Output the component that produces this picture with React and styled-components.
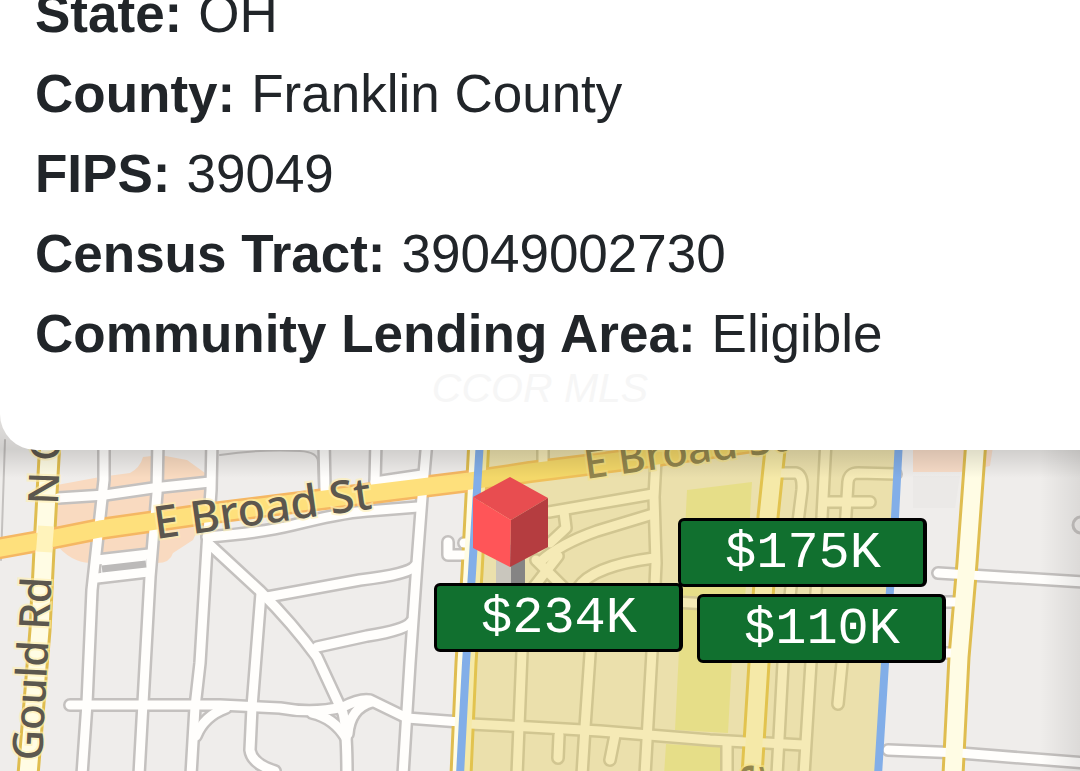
import styled, { createGlobalStyle } from 'styled-components'

const colors = {
  text: '#212529',
  watermark: '#f6f6f6',
  land: '#efedeb',
  casing: '#c4c1bf',
  gold: '#dfbd50',
  tract: '#e6ce4e',
  border: '#82aee8',
  tag: '#11702f',
}

const GlobalStyle = createGlobalStyle`
  * {
    box-sizing: border-box;
  }
  body {
    margin: 0;
    background-color: #ffffff;
    color: ${colors.text};
    font-family: 'Liberation Sans', Arial, sans-serif;
  }
`

const Page = styled.div`
  display: flex;
  flex-direction: column;
  min-height: 100vh;
`

const Card = styled.section`
  position: relative;
  z-index: 1;
  overflow: hidden;
  padding: 0 35px 48px;
  background-color: #ffffff;
  border-bottom-left-radius: 36px;
`

// the list is scrolled a little, its first line goes under the top edge
const FactList = styled.dl`
  margin: -26px 0 0;
`

const Fact = styled.div`
  display: flex;
  gap: 16px;
  font-size: 53px;
  line-height: 80px;
`

const FactName = styled.dt`
  font-weight: bold;
`

const FactValue = styled.dd`
  margin: 0;
`

const Watermark = styled.p`
  margin: 0;
  color: ${colors.watermark};
  font-size: 41px;
  font-style: italic;
  line-height: 28px;
  text-align: center;
`

const MapArea = styled.section`
  position: relative;
  flex: 1;
  min-height: 357px;
  margin-top: -36px;
  overflow: hidden;
  background-color: ${colors.land};
`

const MapDrawing = styled.svg`
  display: block;
  position: absolute;
  inset: 0;
  width: 100%;
  height: 100%;
`

const StreetName = styled.text`
  fill: #5c574e;
  stroke: #fff0b0;
  stroke-opacity: 0.6;
  stroke-width: 4px;
  paint-order: stroke;
  font-family: 'Noto Sans', sans-serif;
  font-size: ${({ $size }) => $size || 45}px;
  font-weight: 500;
`

const PriceTag = styled.button`
  position: absolute;
  left: ${({ $x }) => $x}px;
  top: ${({ $y }) => $y}px;
  width: 249px;
  height: 69px;
  padding: 3px 0 0 2px;
  border: 3px solid #000000;
  border-right-width: 4px;
  border-radius: 6px;
  background-color: ${colors.tag};
  color: #ffffff;
  font-family: 'Liberation Mono', 'Courier New', monospace;
  font-size: 52px;
  line-height: 60px;
  text-align: center;
`

const facts = [
  { name: 'State', value: 'OH' },
  { name: 'County', value: 'Franklin County' },
  { name: 'FIPS', value: '39049' },
  { name: 'Census Tract', value: '39049002730' },
  { name: 'Community Lending Area', value: 'Eligible' },
]

const prices = [
  { label: '$175K', x: 678, y: 104 },
  { label: '$110K', x: 697, y: 180 },
  { label: '$234K', x: 434, y: 169 },
]

const streets = [
  // west of the tract
  'M104 440 L104 480 L100 517 L92 590 L87 703 L82 775',
  'M158 440 L157 493 L150 577 L143 703 L139 775',
  'M212 440 L211 490 L207 547 L200 663 L195 707 L191 775',
  'M58 498 L105 495 L153 488 L210 482',
  'M97 560 L149 554',
  'M97 578 L148 572',
  'M70 705 L220 705 L280 708 Q312 714 343 707 Q360 698 370 700 L407 718 L460 722',
  'M226 708 Q204 716 196 736',
  'M207 537 Q260 533 293 525 Q340 513 367 511 L418 507',
  'M208 543 L260 591 Q293 624 317 657 L343 713 Q347 730 347 775',
  'M261 593 L252 707 L250 750 Q252 764 275 771',
  'M267 597 L360 580 Q410 574 415 566',
  'M317 647 L367 636 Q406 630 411 622',
  'M427 440 L422 497 L417 563 L410 663 L403 775',
  'M324 440 L325 490',
  'M376 440 L375 483',
  'M375 482 L422 475',
  'M312 713 Q334 718 346 738',
  'M372 702 Q350 708 348 734',
  'M448 542 L448 555 L468 555',
  'M464 543 L470 543',
  // inside the tract
  'M470 724 L530 727 L600 731 L710 740 L803 745',
  'M528 590 L522 652 L517 775',
  'M591 640 L585 727 L582 775',
  'M657 440 L654 497 L656 563 L652 652 L645 775',
  'M543 440 L543 470',
  'M549 512 L653 494',
  'M540 562 Q560 544 597 531 L653 514',
  'M578 588 Q592 566 654 558',
  'M564 512 L566 528 L550 543',
  'M536 560 L564 588',
  'M558 556 L533 588',
  'M656 601 L745 606',
  'M559 735 L558 758',
  'M615 735 L610 760',
  'M780 473 L796 473 Q803 475 802 490 L797 530 L783 663 L777 775',
  'M826 440 L822 517 L813 630 L804 775',
  'M896 474 L858 473 Q849 473 848 482 L845 530',
  'M827 502 L870 502',
  'M845 640 L842 663 L838 704',
  'M727 743 L727 775',
  // east of the tract
  'M938 573 L1085 582',
  'M888 750 L960 753 L1085 763',
  'M938 602 L960 602',
  'M946 653 L960 653',
]

const avenues = [
  'M50 440 L45 530 L40 630 L28 775',
  'M479 440 L472 573 L466 663 L461 775',
  'M776 440 L768 517 L759 663 L752 775',
  'M976 440 L967 563 L959 657 L953 775',
]

const broadStreet = 'M-5 549 L45 540 L100 529 L205 514 L373 493 L470 481 L530 472 L650 457 L780 438'

const tractWest = 'M480 440 L472 573 L466 663 L460 775'
const tractEast = 'M899 440 L895 517 L890 590 L885 663 L878 775'

const StreetMap = () => (
  <MapDrawing
    viewBox="0 414 1080 357"
    preserveAspectRatio="xMinYMin slice"
    role="img"
    aria-label="Map of the census tract"
  >
    <defs>
      <linearGradient id="topShade" x1="0" y1="0" x2="0" y2="1">
        <stop offset="0" stopColor="#000000" stopOpacity="0.05" />
        <stop offset="0.55" stopColor="#000000" stopOpacity="0.13" />
        <stop offset="1" stopColor="#000000" stopOpacity="0" />
      </linearGradient>
      <linearGradient id="sideShade" x1="0" y1="0" x2="1" y2="0">
        <stop offset="0" stopColor="#000000" stopOpacity="0" />
        <stop offset="1" stopColor="#000000" stopOpacity="0.08" />
      </linearGradient>
    </defs>
    <rect x="0" y="414" width="1080" height="357" fill={colors.land} />

    {/* shopping blocks and parks */}
    <path
      d="M57 485 L100 477 L130 473 Q140 468 143 457 L160 455 L187 460 L205 473 L207 510 L193 540 L173 553 Q170 563 157 563 L147 553 L90 563 Q70 562 55 543 Z"
      fill="#f9dac0"
    />
    <path d="M913 440 L994 440 L990 466 L960 472 L913 472 Z" fill="#f8dcc8" />
    <path d="M913 476 L960 476 L955 508 L913 508 Z" fill="#ebe9e7" />
    <path
      d="M687 490 L752 482 L745 600 L735 602 L728 733 L675 730 Z M666 744 L722 747 L720 775 L664 775 Z"
      fill="#e7e9b0"
    />

    <g fill="none" strokeLinejoin="round" strokeLinecap="round">
      <path d="M5 440 L1 560" stroke={colors.casing} strokeWidth="2" />
      <path
        d="M220 455 Q260 449 300 451 Q318 452 318 462 L319 490"
        stroke={colors.casing}
        strokeWidth="2"
      />
      <circle cx="1081" cy="525" r="8" stroke={colors.casing} strokeWidth="3" />
      {streets.map((d) => (
        <path key={d} d={d} stroke={colors.casing} strokeWidth="14" />
      ))}
      {avenues.map((d) => (
        <path key={d} d={d} stroke={colors.gold} strokeWidth="23" />
      ))}
      <path d={broadStreet} stroke="#f5b763" strokeWidth="22" />
      {streets.map((d) => (
        <path key={d} d={d} stroke="#fffefc" strokeWidth="9" />
      ))}
      {avenues.map((d) => (
        <path key={d} d={d} stroke="#fffce4" strokeWidth="17" />
      ))}
      <path d={broadStreet} stroke="#fee07c" strokeWidth="17" />
      <path d="M102 560 L147 555 L146 572 L101 577 Z" fill="#fffefc" />
      <path d="M102 569 L146 564" stroke="#bcbab9" strokeWidth="7" strokeLinecap="butt" />
      <path d="M46 526 L44 552" stroke="#fff3bb" strokeWidth="16" strokeLinecap="butt" />
    </g>

    <StreetName $size={42} transform="translate(586 479) rotate(-8)">
      E Broad St
    </StreetName>
    <StreetName $size={42} textAnchor="end" transform="translate(764 764) rotate(-88)">
      e
    </StreetName>

    <path
      d="M480 440 L472 573 L466 663 L460 775 L878 775 L885 663 L890 590 L895 517 L899 440 Z"
      fill={colors.tract}
      fillOpacity="0.4"
    />
    <g fill="none" stroke={colors.border} strokeWidth="8">
      <path d={tractWest} />
      <path d={tractEast} />
    </g>

    <StreetName transform="translate(156 539) rotate(-8)">E Broad St</StreetName>
    <StreetName $size={42} transform="translate(42 761) rotate(-87)">
      Gould Rd
    </StreetName>
    <StreetName $size={42} transform="translate(58 505) rotate(-88)">
      N G
    </StreetName>

    <rect x="0" y="414" width="1080" height="64" fill="url(#topShade)" />
    <rect x="1040" y="414" width="40" height="357" fill="url(#sideShade)" />

    {/* pin of the subject property */}
    <path d="M496 545 H511 V590 H496 Z" fill="#c9c6bd" />
    <path d="M511 545 H525 V590 H511 Z" fill="#858484" />
    <path d="M510 477 L548 498 L511 520 L473 497 Z" fill="#e84d50" />
    <path d="M473 497 L511 520 L510 567 L473 548 Z" fill="#ff5558" />
    <path d="M548 498 L511 520 L510 567 L548 547 Z" fill="#b53d40" />
  </MapDrawing>
)

const App = () => {
  return (
    <Page>
      <GlobalStyle />
      <Card>
        <FactList>
          {facts.map(({ name, value }) => (
            <Fact key={name}>
              <FactName>{name}:</FactName>
              <FactValue>{value}</FactValue>
            </Fact>
          ))}
        </FactList>
        <Watermark>CCOR MLS</Watermark>
      </Card>
      <MapArea>
        <StreetMap />
        {prices.map(({ label, x, y }) => (
          <PriceTag key={label} type="button" $x={x} $y={y}>
            {label}
          </PriceTag>
        ))}
      </MapArea>
    </Page>
  )
}

export default App
